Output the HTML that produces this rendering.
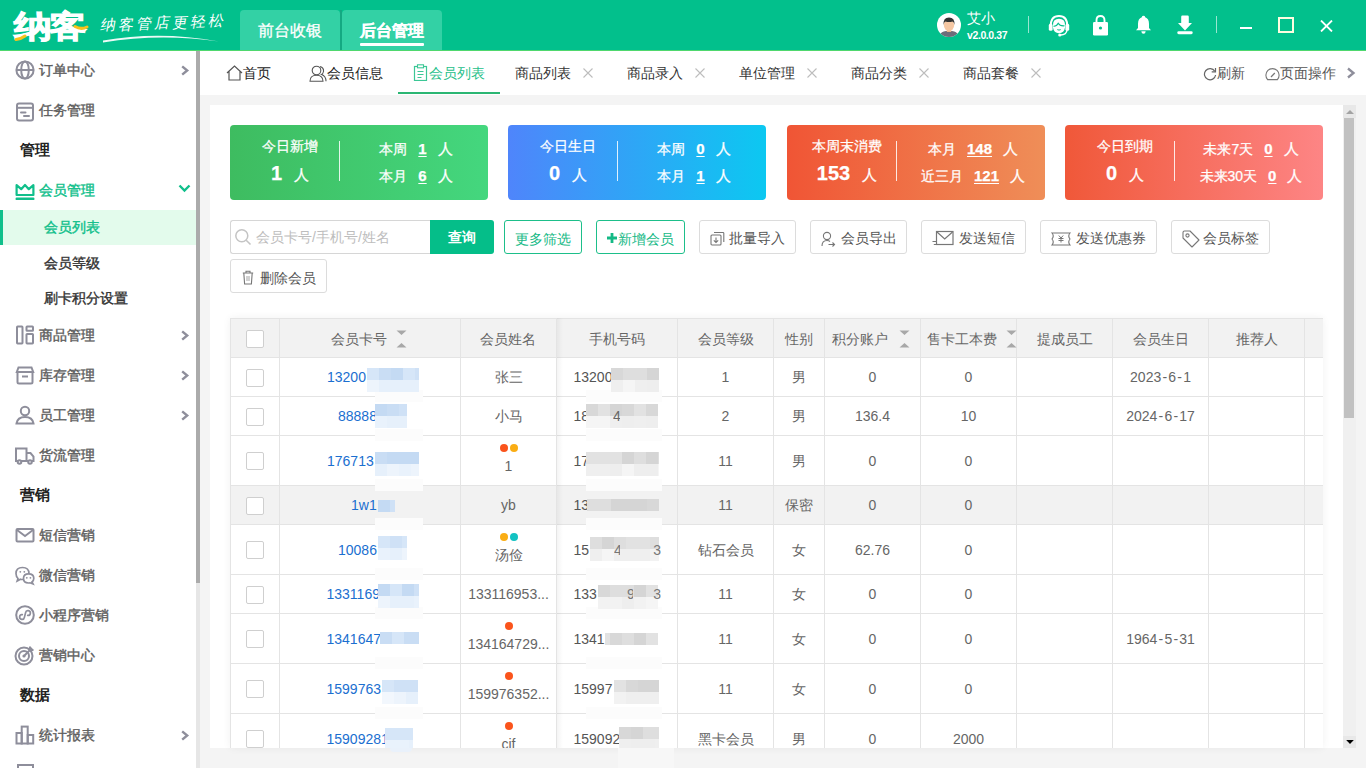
<!DOCTYPE html>
<html><head><meta charset="utf-8">
<style>
*{margin:0;padding:0;box-sizing:border-box}
html,body{width:1366px;height:768px;overflow:hidden;background:#fff;font-family:"Liberation Sans",sans-serif;}
.abs{position:absolute}
#hdr{position:absolute;left:0;top:0;width:1366px;height:50px;background:#02c08c}
#hdrline{position:absolute;left:0;top:50px;width:1366px;height:1px;background:#4fd86e}
.htab{position:absolute;top:10px;height:40px;width:100px;background:#33d1a5;border-radius:4px 4px 0 0;color:#fff;font-size:16px;line-height:20px;padding-top:11px;text-align:center;-webkit-text-stroke:0.3px #fff}
#side{position:absolute;left:0;top:51px;width:196px;height:717px;background:#fff;overflow:hidden}
.si{position:absolute;left:0;width:196px;height:40px;font-size:14px;color:#555;font-weight:500}
.si .tx{position:absolute;left:39px;top:0;line-height:40px}
.si svg.ic{position:absolute;left:15px;top:10px}
.si .chev{position:absolute;left:180px;top:15px}
.sec{position:absolute;left:20px;font-size:15px;font-weight:700;color:#222;line-height:40px}
.sub{position:absolute;left:0;width:196px;height:35px;font-size:14px;color:#333;font-weight:500;line-height:35px}
.sub .tx{position:absolute;left:44px;top:0}
.ttx{position:absolute;top:63px;font-size:14px;line-height:20px;white-space:nowrap}
.stx{font-size:14px;line-height:20px;-webkit-text-stroke:0.4px currentColor;white-space:nowrap}
.ssec{font-size:15px;line-height:20px;font-weight:700;color:#222}
#sbtrack{position:absolute;left:196px;top:51px;width:4px;height:717px;background:#e6e6e6}
#sbthumb{position:absolute;left:196px;top:51px;width:4px;height:532px;background:#ababab}
#content{position:absolute;left:200px;top:51px;width:1166px;height:717px;background:#f4f4f4}
#tabbar{position:absolute;left:200px;top:51px;width:1166px;height:44px;background:#fff}
.tt{position:absolute;top:0;height:44px;line-height:44px;font-size:14px;color:#333;white-space:nowrap}
.tt .x{position:absolute;top:0;color:#bbb;font-size:14px}
.scard{top:125px;width:258px;height:75px;border-radius:4px;color:#fff;-webkit-text-stroke:0.25px #fff}
.gbtn{top:220px;height:34px;border:1.5px solid #1dbf8a;border-radius:3px;color:#14b985;font-size:14px;line-height:20px;padding-top:7.5px;text-align:center;white-space:nowrap}
.wbtn{height:34px;border:1px solid #dcdcdc;border-radius:3px;background:#fff}
#card{position:absolute;left:210px;top:105px;width:1146px;height:643px;background:#fff;overflow:hidden}
</style></head><body>
<div id="hdr"></div>
<div id="hdrline"></div>
<div class="abs" style="left:14px;top:7px;font-size:36px;font-weight:700;color:#fff;line-height:40px;letter-spacing:-2px;transform:scaleX(1.04) scaleY(0.85);transform-origin:0 50%;-webkit-text-stroke:1.2px #fff">纳客</div>
<svg class="abs" style="left:12px;top:24px" width="80" height="20"><path d="M4 15.5 Q9 15 13 12" stroke="#f8c21c" stroke-width="3" fill="none" stroke-linecap="round"/><path d="M63 2.5 Q69 6 75 3" stroke="#f8c21c" stroke-width="3" fill="none" stroke-linecap="round"/></svg>
<div class="abs" style="left:101px;top:13px;font-size:15px;color:#fff;line-height:20px;letter-spacing:3px;transform:skewX(-12deg) rotate(-2deg)">纳客管店更轻松</div>
<svg class="abs" style="left:100px;top:32px" width="125" height="12"><path d="M3 8.5 Q60 -1.5 119 9.5 Q60 1 3 10.5Z" fill="#fff" opacity=".92"/></svg>
<div class="htab" style="left:240px">前台收银</div>
<div class="htab" style="left:342px;font-weight:700">后台管理</div><div class="abs" style="left:360px;top:43px;width:64px;height:2.5px;background:#fff;border-radius:1px"></div>
<div class="abs" style="left:340px;top:10px;width:2px;height:40px;background:#14a982"></div>
<!-- user -->
<div class="abs" style="left:937px;top:13px;width:24px;height:24px;border-radius:50%;background:#fff;overflow:hidden">
 <svg width="24" height="24" viewBox="0 0 24 24"><path d="M3 22 Q4 18.5 9 18 H15 Q20 18.5 21 22 V24 H3Z" fill="#6d6d7a"/><rect x="9.8" y="15" width="4.4" height="4" fill="#eab68f"/><ellipse cx="12" cy="12" rx="5.2" ry="6" fill="#f5c7a3"/><path d="M6.6 12 Q6 4.6 12 4.6 Q18 4.6 17.4 12 Q17 8.8 15.5 8.4 Q12 9.6 8.5 8.4 Q7 8.8 6.6 12Z" fill="#333"/></svg>
</div>
<div class="abs" style="left:967px;top:9px;font-size:14px;color:#fff;line-height:18px">艾小</div>
<div class="abs" style="left:967px;top:28px;font-size:10.5px;font-weight:700;color:#fff;line-height:14px;letter-spacing:-0.4px">v2.0.0.37</div>
<div class="abs" style="left:1028px;top:16px;width:1px;height:17px;background:rgba(255,255,255,.6)"></div>
<svg class="abs" style="left:1048px;top:13.5px" width="22" height="23" viewBox="0 0 22 23"><path d="M2.6 12.5 Q2.6 2 11 2 Q19.4 2 19.4 12.5" stroke="#fff" stroke-width="1.9" fill="none"/><rect x="0.8" y="9.8" width="3.8" height="7" rx="1.6" fill="#fff"/><rect x="17.4" y="9.8" width="3.8" height="7" rx="1.6" fill="#fff"/><path d="M5 11 Q5 4.8 11 4.8 Q17 4.8 17 11 V13.5 Q16.2 19.2 11 19.2 Q5.8 19.2 5 13.5Z" fill="#fff"/><path d="M5.5 12.2 Q8.5 12.5 10.2 9.3 Q12 12.3 16.5 11.8" stroke="#02c08c" stroke-width="1.1" fill="none"/><path d="M9.3 15.6 Q11 16.6 12.7 15.6" stroke="#02c08c" stroke-width="1" fill="none"/><path d="M19 16 Q18.5 21 12.5 21" stroke="#fff" stroke-width="1.5" fill="none"/><circle cx="11.8" cy="21" r="1.6" fill="#fff"/></svg>
<svg class="abs" style="left:1092px;top:15px" width="17" height="21" viewBox="0 0 17 21"><path d="M4.5 8 V5.2 Q4.5 1 8.5 1 Q12.5 1 12.5 5.2 V8" stroke="#fff" stroke-width="1.9" fill="none"/><rect x="1" y="7" width="15" height="13.5" rx="1.3" fill="#fff"/><circle cx="8.5" cy="13" r="1.6" fill="#02c08c"/></svg>
<svg class="abs" style="left:1135px;top:15px" width="17" height="20" viewBox="0 0 17 20"><path d="M8.5 0.8 Q10 0.8 10.2 2.2 Q14 3.5 14 9 L14 13 L16 15.2 L1 15.2 L3 13 L3 9 Q3 3.5 6.8 2.2 Q7 0.8 8.5 0.8Z" fill="#fff"/><path d="M6.3 16.2 H10.7 Q10.5 18.8 8.5 18.8 Q6.5 18.8 6.3 16.2Z" fill="#fff"/></svg>
<svg class="abs" style="left:1177px;top:15px" width="16" height="20" viewBox="0 0 16 20"><path d="M4.2 1.8 Q4.2 0.6 5.4 0.6 H10.6 Q11.8 0.6 11.8 1.8 V8 H15 L8 15.5 L1 8 H4.2Z" fill="#fff"/><rect x="0.3" y="16.3" width="15.4" height="2.9" rx="1.4" fill="#fff"/></svg>
<div class="abs" style="left:1216px;top:16px;width:1px;height:17px;background:rgba(255,255,255,.6)"></div>
<div class="abs" style="left:1240px;top:26.5px;width:12px;height:2.5px;background:#fff"></div>
<div class="abs" style="left:1278px;top:17px;width:16px;height:16px;border:2px solid #fdfde0"></div>
<svg class="abs" style="left:1320px;top:20px" width="13" height="12" viewBox="0 0 13 12"><path d="M1 0.5 L12 11.5 M12 0.5 L1 11.5" stroke="#fff" stroke-width="1.8"/></svg>

<div id="side"></div>
<div class="abs stx" style="left:39px;top:60px;color:#5e5e5e">订单中心</div><svg class="abs" style="left:14px;top:59px" width="22" height="22" viewBox="0 0 22 22"><circle cx="11" cy="11" r="8.6" stroke="#8e8e9b" stroke-width="2" fill="none"/><ellipse cx="11" cy="11" rx="3.8" ry="8.6" stroke="#8e8e9b" stroke-width="2" fill="none"/><path d="M2.6 11 H19.4" stroke="#8e8e9b" stroke-width="2" fill="none"/></svg><svg class="abs" style="left:180px;top:65px" width="10" height="11" viewBox="0 0 10 11"><path d="M2.2 1.3 L7.2 5.5 L2.2 9.7" stroke="#8e8e9b" stroke-width="2.4" fill="none"/></svg><div class="abs stx" style="left:39px;top:100px;color:#5e5e5e">任务管理</div><svg class="abs" style="left:14px;top:100.5px" width="22" height="22" viewBox="0 0 22 22"><rect x="3" y="2.5" width="16" height="17" rx="2" stroke="#8e8e9b" stroke-width="2" fill="none"/><path d="M3 6.8 H19" stroke="#8e8e9b" stroke-width="2" fill="none"/><path d="M7 11.5 H11.5 M10 15 H15" stroke="#8e8e9b" stroke-width="2" stroke-linecap="round"/></svg><div class="abs ssec" style="left:20px;top:140px">管理</div><div class="abs stx" style="left:39px;top:180px;color:#10bf8b">会员管理</div><svg class="abs" style="left:14px;top:179px" width="22" height="22" viewBox="0 0 22 22"><path d="M2.6 16 V6.2 L7.2 10.2 L11 6 L14.8 10.2 L19.4 6.2 V16Z" stroke="#10bf8b" stroke-width="2.2" fill="none" stroke-linejoin="round"/><rect x="1.5" y="18.5" width="19" height="2.6" rx="1.2" fill="#10bf8b"/></svg><svg class="abs" style="left:178px;top:184px" width="13" height="9" viewBox="0 0 13 9"><path d="M1.5 1.5 L6.5 6.5 L11.5 1.5" stroke="#10bf8b" stroke-width="2.4" fill="none"/></svg><div class="abs" style="left:0;top:210px;width:196px;height:35px;background:#e3fbec"></div><div class="abs" style="left:0;top:210px;width:3px;height:35px;background:#10bf8b"></div><div class="abs stx" style="left:44px;top:217px;color:#10bf8b">会员列表</div><div class="abs stx" style="left:44px;top:253px;color:#333">会员等级</div><div class="abs stx" style="left:44px;top:288px;color:#333">刷卡积分设置</div><div class="abs stx" style="left:39px;top:325px;color:#5e5e5e">商品管理</div><svg class="abs" style="left:14px;top:324px" width="22" height="22" viewBox="0 0 22 22"><rect x="3" y="2.6" width="5.5" height="16.8" rx="0.6" stroke="#8e8e9b" stroke-width="2" fill="none"/><rect x="12.5" y="2.6" width="6.5" height="4.2" rx="0.6" stroke="#8e8e9b" stroke-width="2" fill="none"/><rect x="12.5" y="10" width="6.5" height="9.4" rx="0.6" stroke="#8e8e9b" stroke-width="2" fill="none"/></svg><svg class="abs" style="left:180px;top:330px" width="10" height="11" viewBox="0 0 10 11"><path d="M2.2 1.3 L7.2 5.5 L2.2 9.7" stroke="#8e8e9b" stroke-width="2.4" fill="none"/></svg><div class="abs stx" style="left:39px;top:365px;color:#5e5e5e">库存管理</div><svg class="abs" style="left:14px;top:364px" width="22" height="22" viewBox="0 0 22 22"><path d="M3.5 8 V18 Q3.5 19.5 5 19.5 H17 Q18.5 19.5 18.5 18 V8" stroke="#8e8e9b" stroke-width="2" fill="none"/><path d="M2.8 8 L4.5 3.5 H17.5 L19.2 8Z" stroke="#8e8e9b" stroke-width="2" fill="none"/><path d="M8 12.5 H14" stroke="#8e8e9b" stroke-width="2" fill="none"/></svg><svg class="abs" style="left:180px;top:370px" width="10" height="11" viewBox="0 0 10 11"><path d="M2.2 1.3 L7.2 5.5 L2.2 9.7" stroke="#8e8e9b" stroke-width="2.4" fill="none"/></svg><div class="abs stx" style="left:39px;top:405px;color:#5e5e5e">员工管理</div><svg class="abs" style="left:14px;top:404px" width="22" height="22" viewBox="0 0 22 22"><circle cx="11" cy="7" r="4.2" stroke="#8e8e9b" stroke-width="2" fill="none"/><path d="M2.5 19.5 Q3.5 13 11 13 Q18.5 13 19.5 19.5Z" stroke="#8e8e9b" stroke-width="2" fill="none"/></svg><svg class="abs" style="left:180px;top:410px" width="10" height="11" viewBox="0 0 10 11"><path d="M2.2 1.3 L7.2 5.5 L2.2 9.7" stroke="#8e8e9b" stroke-width="2.4" fill="none"/></svg><div class="abs stx" style="left:39px;top:445px;color:#5e5e5e">货流管理</div><svg class="abs" style="left:14px;top:444px" width="22" height="22" viewBox="0 0 22 22"><path d="M2 4.5 H12.5 V17 H2Z" stroke="#8e8e9b" stroke-width="2" fill="none"/><path d="M12.5 9 H16.5 L19.5 12.5 V17 H12.5" stroke="#8e8e9b" stroke-width="2" fill="none"/><circle cx="5.5" cy="18" r="1.8" fill="#fff" stroke="#8e8e9b" stroke-width="2" fill="none"/><circle cx="16" cy="18" r="1.8" fill="#fff" stroke="#8e8e9b" stroke-width="2" fill="none"/></svg><div class="abs ssec" style="left:20px;top:485px">营销</div><div class="abs stx" style="left:39px;top:525px;color:#5e5e5e">短信营销</div><svg class="abs" style="left:14px;top:524px" width="22" height="22" viewBox="0 0 22 22"><rect x="2.5" y="5" width="17" height="12.5" rx="1" stroke="#8e8e9b" stroke-width="2" fill="none"/><path d="M3 6 L11 12 L19 6" stroke="#8e8e9b" stroke-width="1.9" fill="none"/></svg><div class="abs stx" style="left:39px;top:565px;color:#5e5e5e">微信营销</div><svg class="abs" style="left:14px;top:564px" width="22" height="22" viewBox="0 0 22 22"><path d="M4 14.5 L3.2 17 L6.5 15.2 Q7.5 15.5 8.5 15.5 Q15 15.5 15 9.5 Q15 3.5 8.5 3.5 Q2 3.5 2 9.5 Q2 12.5 4 14.5Z" stroke="#8e8e9b" stroke-width="1.7" fill="#fff"/><path d="M18 18 L19 20 L16 18.8 Q15.2 19 14.5 19 Q9.5 19 9.5 14.3 Q9.5 9.8 14.5 9.8 Q19.8 9.8 19.8 14.3 Q19.8 16.5 18 18Z" stroke="#8e8e9b" stroke-width="1.7" fill="#fff"/><circle cx="6.3" cy="7.8" r="0.9" fill="#8e8e9b"/><circle cx="10.3" cy="7.8" r="0.9" fill="#8e8e9b"/><circle cx="12.8" cy="13.8" r="0.9" fill="#8e8e9b"/><circle cx="16.4" cy="13.8" r="0.9" fill="#8e8e9b"/></svg><div class="abs stx" style="left:39px;top:605px;color:#5e5e5e">小程序营销</div><svg class="abs" style="left:14px;top:604px" width="22" height="22" viewBox="0 0 22 22"><circle cx="11" cy="11" r="8.8" stroke="#8e8e9b" stroke-width="2" fill="none"/><path d="M8.3 10.6 A2.4 2.4 0 1 0 10.4 13.4 L11.6 8.6 A2.4 2.4 0 1 1 13.7 11.4" stroke="#8e8e9b" stroke-width="1.7" fill="none" stroke-linecap="round"/></svg><div class="abs stx" style="left:39px;top:645px;color:#5e5e5e">营销中心</div><svg class="abs" style="left:14px;top:644px" width="22" height="22" viewBox="0 0 22 22"><circle cx="10" cy="12" r="8.5" stroke="#8e8e9b" stroke-width="2" fill="none"/><circle cx="10" cy="12" r="5" stroke="#8e8e9b" stroke-width="2" fill="none"/><circle cx="10" cy="12" r="1.6" fill="#8e8e9b"/><path d="M10 12 L18 4 M16 2.5 V6 H19.5" stroke="#8e8e9b" stroke-width="2" fill="none"/></svg><div class="abs ssec" style="left:20px;top:685px">数据</div><div class="abs stx" style="left:39px;top:725px;color:#5e5e5e">统计报表</div><svg class="abs" style="left:14px;top:724px" width="22" height="22" viewBox="0 0 22 22"><rect x="2.5" y="9" width="5.2" height="10.5" stroke="#8e8e9b" stroke-width="2" fill="none"/><rect x="7.7" y="2.6" width="6" height="16.9" stroke="#8e8e9b" stroke-width="2" fill="none"/><rect x="13.7" y="11" width="5.5" height="8.5" stroke="#8e8e9b" stroke-width="2" fill="none"/></svg><svg class="abs" style="left:180px;top:730px" width="10" height="11" viewBox="0 0 10 11"><path d="M2.2 1.3 L7.2 5.5 L2.2 9.7" stroke="#8e8e9b" stroke-width="2.4" fill="none"/></svg><div class="abs" style="left:17px;top:764px;width:17px;height:6px;border:2px solid #8e8e9b;border-bottom:none"></div>
<div id="sbtrack"></div><div id="sbthumb"></div>
<div id="content"></div>
<div id="tabbar"></div>
<svg class="abs" style="left:226px;top:65px" width="17" height="16" viewBox="0 0 17 16"><path d="M1 8 L8.5 1 L16 8 M3 6.5 V15 H14 V6.5" stroke="#555" stroke-width="1.2" fill="none"/></svg>
<div class="abs ttx" style="left:243px;color:#222">首页</div>
<svg class="abs" style="left:309px;top:65px" width="18" height="17" viewBox="0 0 18 17"><circle cx="7.5" cy="5.5" r="4.3" stroke="#555" stroke-width="1.1" fill="none"/><path d="M1 16.3 Q1 10.3 7.5 10.3 Q14 10.3 14 16.3Z" stroke="#555" stroke-width="1.1" fill="none"/><path d="M11 1.6 Q15 2.5 14.5 6.5 Q14 8.8 12.5 9.5 Q17 11 17 16.3" stroke="#555" stroke-width="1.1" fill="none"/></svg>
<div class="abs ttx" style="left:327px;color:#222">会员信息</div>
<svg class="abs" style="left:413px;top:64px" width="16" height="17" viewBox="0 0 16 17"><rect x="1.5" y="2.5" width="12" height="14" stroke="#3cc796" stroke-width="1.2" fill="none"/><rect x="4.5" y="0.8" width="6" height="3" fill="#fff" stroke="#3cc796" stroke-width="1.1"/><path d="M4.5 7.5 H10.5 M4.5 10.5 H10.5 M4.5 13.5 H8.5" stroke="#3cc796" stroke-width="1.1"/></svg>
<div class="abs ttx" style="left:429px;color:#26bf8a">会员列表</div>
<div class="abs" style="left:398px;top:92px;width:102px;height:2px;background:#2bb673"></div>
<div class="abs ttx" style="left:515px;color:#333">商品列表</div><svg class="abs" style="left:583px;top:68px" width="10" height="10" viewBox="0 0 10 10"><path d="M0.5 0.5 L9.5 9.5 M9.5 0.5 L0.5 9.5" stroke="#bdbdbd" stroke-width="1.1"/></svg><div class="abs ttx" style="left:627px;color:#333">商品录入</div><svg class="abs" style="left:695px;top:68px" width="10" height="10" viewBox="0 0 10 10"><path d="M0.5 0.5 L9.5 9.5 M9.5 0.5 L0.5 9.5" stroke="#bdbdbd" stroke-width="1.1"/></svg><div class="abs ttx" style="left:739px;color:#333">单位管理</div><svg class="abs" style="left:807px;top:68px" width="10" height="10" viewBox="0 0 10 10"><path d="M0.5 0.5 L9.5 9.5 M9.5 0.5 L0.5 9.5" stroke="#bdbdbd" stroke-width="1.1"/></svg><div class="abs ttx" style="left:851px;color:#333">商品分类</div><svg class="abs" style="left:919px;top:68px" width="10" height="10" viewBox="0 0 10 10"><path d="M0.5 0.5 L9.5 9.5 M9.5 0.5 L0.5 9.5" stroke="#bdbdbd" stroke-width="1.1"/></svg><div class="abs ttx" style="left:963px;color:#333">商品套餐</div><svg class="abs" style="left:1031px;top:68px" width="10" height="10" viewBox="0 0 10 10"><path d="M0.5 0.5 L9.5 9.5 M9.5 0.5 L0.5 9.5" stroke="#bdbdbd" stroke-width="1.1"/></svg><svg class="abs" style="left:1203px;top:67px" width="14" height="14" viewBox="0 0 14 14"><path d="M11.8 4.2 A5.6 5.6 0 1 0 12.6 8" stroke="#666" stroke-width="1.2" fill="none"/><path d="M12.5 1 V4.8 H8.7" stroke="#666" stroke-width="1.2" fill="none"/></svg>
<div class="abs ttx" style="left:1217px;color:#555">刷新</div>
<svg class="abs" style="left:1265px;top:67px" width="16" height="14" viewBox="0 0 16 14"><path d="M2.6 12.6 A6.6 6.6 0 1 1 12.4 12.6 Z" stroke="#777" stroke-width="1.1" fill="none"/><path d="M6 10 L9.8 6" stroke="#777" stroke-width="1.2"/></svg>
<div class="abs ttx" style="left:1280px;color:#555">页面操作</div>
<svg class="abs" style="left:1346px;top:67px" width="10" height="12" viewBox="0 0 10 12"><path d="M2 1.5 L7.5 6 L2 10.5" stroke="#8e8e9b" stroke-width="2.3" fill="none"/></svg>
<div id="card"></div>

<div class="abs" style="left:230px;top:318px;width:1093px;height:430px;box-shadow:0 0 8px rgba(0,0,0,.06)"></div><div class="abs" id="tbl" style="left:230px;top:318px;width:1093px;height:430px;overflow:hidden;background:#fff"><div class="abs" style="left:0;top:0;width:1093px;height:39px;background:#f2f2f2"></div><div class="abs" style="left:0;top:167px;width:1093px;height:39px;background:#f2f2f2"></div><div class="abs" style="left:0;top:0;width:1093px;height:1px;background:#e4e4e4"></div><div class="abs" style="left:0;top:39px;width:1093px;height:1px;background:#e4e4e4"></div><div class="abs" style="left:0;top:78px;width:1093px;height:1px;background:#e4e4e4"></div><div class="abs" style="left:0;top:117px;width:1093px;height:1px;background:#e4e4e4"></div><div class="abs" style="left:0;top:167px;width:1093px;height:1px;background:#e4e4e4"></div><div class="abs" style="left:0;top:206px;width:1093px;height:1px;background:#e4e4e4"></div><div class="abs" style="left:0;top:256px;width:1093px;height:1px;background:#e4e4e4"></div><div class="abs" style="left:0;top:295px;width:1093px;height:1px;background:#e4e4e4"></div><div class="abs" style="left:0;top:345px;width:1093px;height:1px;background:#e4e4e4"></div><div class="abs" style="left:0;top:395px;width:1093px;height:1px;background:#e4e4e4"></div><div class="abs" style="left:0;top:445px;width:1093px;height:1px;background:#e4e4e4"></div><div class="abs" style="left:0px;top:0;width:1px;height:430px;background:#e4e4e4"></div><div class="abs" style="left:49px;top:0;width:1px;height:430px;background:#e4e4e4"></div><div class="abs" style="left:230px;top:0;width:1px;height:430px;background:#e4e4e4"></div><div class="abs" style="left:326px;top:0;width:1px;height:430px;background:#e4e4e4"></div><div class="abs" style="left:447px;top:0;width:1px;height:430px;background:#e4e4e4"></div><div class="abs" style="left:543px;top:0;width:1px;height:430px;background:#e4e4e4"></div><div class="abs" style="left:594px;top:0;width:1px;height:430px;background:#e4e4e4"></div><div class="abs" style="left:690px;top:0;width:1px;height:430px;background:#e4e4e4"></div><div class="abs" style="left:786px;top:0;width:1px;height:430px;background:#e4e4e4"></div><div class="abs" style="left:882px;top:0;width:1px;height:430px;background:#e4e4e4"></div><div class="abs" style="left:978px;top:0;width:1px;height:430px;background:#e4e4e4"></div><div class="abs" style="left:1074px;top:0;width:1px;height:430px;background:#e4e4e4"></div><div class="abs" style="left:327px;top:0;width:6px;height:430px;background:linear-gradient(90deg,rgba(0,0,0,.045),rgba(0,0,0,0))"></div><div class="abs" style="left:16px;top:12.0px;width:18px;height:18px;border:1px solid #cfcfcf;border-radius:2px;background:#fff"></div><div class="abs" style="left:16px;top:50.5px;width:18px;height:18px;border:1px solid #cfcfcf;border-radius:2px;background:#fff"></div><div class="abs" style="left:16px;top:89.5px;width:18px;height:18px;border:1px solid #cfcfcf;border-radius:2px;background:#fff"></div><div class="abs" style="left:16px;top:134.0px;width:18px;height:18px;border:1px solid #cfcfcf;border-radius:2px;background:#fff"></div><div class="abs" style="left:16px;top:178.5px;width:18px;height:18px;border:1px solid #cfcfcf;border-radius:2px;background:#fff"></div><div class="abs" style="left:16px;top:223.0px;width:18px;height:18px;border:1px solid #cfcfcf;border-radius:2px;background:#fff"></div><div class="abs" style="left:16px;top:267.5px;width:18px;height:18px;border:1px solid #cfcfcf;border-radius:2px;background:#fff"></div><div class="abs" style="left:16px;top:312.0px;width:18px;height:18px;border:1px solid #cfcfcf;border-radius:2px;background:#fff"></div><div class="abs" style="left:16px;top:362.0px;width:18px;height:18px;border:1px solid #cfcfcf;border-radius:2px;background:#fff"></div><div class="abs" style="left:16px;top:412.0px;width:18px;height:18px;border:1px solid #cfcfcf;border-radius:2px;background:#fff"></div><div class="abs" style="left:100.5px;top:10.5px;font-size:14px;line-height:20px;color:#666;white-space:nowrap;">会员卡号</div><svg class="abs" style="left:166px;top:12px" width="11" height="18" viewBox="0 0 11 18"><path d="M0.5 0.5 H10.5 L5.5 5Z M0.5 17.5 H10.5 L5.5 13Z" fill="#a8a8a8"/></svg><div class="abs" style="left:178px;top:10.5px;width:200px;text-align:center;font-size:14px;line-height:20px;color:#666;white-space:nowrap;">会员姓名</div><div class="abs" style="left:287px;top:10.5px;width:200px;text-align:center;font-size:14px;line-height:20px;color:#666;white-space:nowrap;">手机号码</div><div class="abs" style="left:395.5px;top:10.5px;width:200px;text-align:center;font-size:14px;line-height:20px;color:#666;white-space:nowrap;">会员等级</div><div class="abs" style="left:469px;top:10.5px;width:200px;text-align:center;font-size:14px;line-height:20px;color:#666;white-space:nowrap;">性别</div><div class="abs" style="left:602px;top:10.5px;font-size:14px;line-height:20px;color:#666;white-space:nowrap;">积分账户</div><svg class="abs" style="left:668.5px;top:12px" width="11" height="18" viewBox="0 0 11 18"><path d="M0.5 0.5 H10.5 L5.5 5Z M0.5 17.5 H10.5 L5.5 13Z" fill="#a8a8a8"/></svg><div class="abs" style="left:696.5px;top:10.5px;font-size:14px;line-height:20px;color:#666;white-space:nowrap;">售卡工本费</div><svg class="abs" style="left:775.5px;top:12px" width="11" height="18" viewBox="0 0 11 18"><path d="M0.5 0.5 H10.5 L5.5 5Z M0.5 17.5 H10.5 L5.5 13Z" fill="#a8a8a8"/></svg><div class="abs" style="left:734.5px;top:10.5px;width:200px;text-align:center;font-size:14px;line-height:20px;color:#666;white-space:nowrap;">提成员工</div><div class="abs" style="left:830.5px;top:10.5px;width:200px;text-align:center;font-size:14px;line-height:20px;color:#666;white-space:nowrap;">会员生日</div><div class="abs" style="left:926.5px;top:10.5px;width:200px;text-align:center;font-size:14px;line-height:20px;color:#666;white-space:nowrap;">推荐人</div><div class="abs" style="left:97px;top:49.0px;font-size:14px;line-height:20px;color:#1b6fd0;white-space:nowrap;">13200</div><div class="abs" style="left:178.5px;top:49.0px;width:200px;text-align:center;font-size:14px;line-height:20px;color:#666;white-space:nowrap;">张三</div><div class="abs" style="left:343.5px;top:49.0px;font-size:14px;line-height:20px;color:#555;white-space:nowrap;">13200</div><div class="abs" style="left:395.5px;top:49.0px;width:200px;text-align:center;font-size:14px;line-height:20px;color:#666;white-space:nowrap;">1</div><div class="abs" style="left:469px;top:49.0px;width:200px;text-align:center;font-size:14px;line-height:20px;color:#666;white-space:nowrap;">男</div><div class="abs" style="left:542.5px;top:49.0px;width:200px;text-align:center;font-size:14px;line-height:20px;color:#666;white-space:nowrap;">0</div><div class="abs" style="left:638.5px;top:49.0px;width:200px;text-align:center;font-size:14px;line-height:20px;color:#666;white-space:nowrap;">0</div><div class="abs" style="left:830.5px;top:49.0px;width:200px;text-align:center;font-size:14px;line-height:20px;color:#666;white-space:nowrap;">2023<span style="margin:0 1.2px">-</span>6<span style="margin:0 1.2px">-</span>1</div><div class="abs" style="left:108px;top:88.0px;font-size:14px;line-height:20px;color:#1b6fd0;white-space:nowrap;">88888</div><div class="abs" style="left:178.5px;top:88.0px;width:200px;text-align:center;font-size:14px;line-height:20px;color:#666;white-space:nowrap;">小马</div><div class="abs" style="left:343.5px;top:88.0px;font-size:14px;line-height:20px;color:#555;white-space:nowrap;">18</div><div class="abs" style="left:395.5px;top:88.0px;width:200px;text-align:center;font-size:14px;line-height:20px;color:#666;white-space:nowrap;">2</div><div class="abs" style="left:469px;top:88.0px;width:200px;text-align:center;font-size:14px;line-height:20px;color:#666;white-space:nowrap;">男</div><div class="abs" style="left:542.5px;top:88.0px;width:200px;text-align:center;font-size:14px;line-height:20px;color:#666;white-space:nowrap;">136.4</div><div class="abs" style="left:638.5px;top:88.0px;width:200px;text-align:center;font-size:14px;line-height:20px;color:#666;white-space:nowrap;">10</div><div class="abs" style="left:830.5px;top:88.0px;width:200px;text-align:center;font-size:14px;line-height:20px;color:#666;white-space:nowrap;">2024<span style="margin:0 1.2px">-</span>6<span style="margin:0 1.2px">-</span>17</div><div class="abs" style="left:97px;top:132.5px;font-size:14px;line-height:20px;color:#1b6fd0;white-space:nowrap;">176713</div><div class="abs" style="left:269.5px;top:126px;width:8px;height:8px;border-radius:50%;background:#fa541c"></div><div class="abs" style="left:279.5px;top:126px;width:8px;height:8px;border-radius:50%;background:#faad14"></div><div class="abs" style="left:178.5px;top:138px;width:200px;text-align:center;font-size:14px;line-height:20px;color:#666;white-space:nowrap;">1</div><div class="abs" style="left:343.5px;top:132.5px;font-size:14px;line-height:20px;color:#555;white-space:nowrap;">17</div><div class="abs" style="left:395.5px;top:132.5px;width:200px;text-align:center;font-size:14px;line-height:20px;color:#666;white-space:nowrap;">11</div><div class="abs" style="left:469px;top:132.5px;width:200px;text-align:center;font-size:14px;line-height:20px;color:#666;white-space:nowrap;">男</div><div class="abs" style="left:542.5px;top:132.5px;width:200px;text-align:center;font-size:14px;line-height:20px;color:#666;white-space:nowrap;">0</div><div class="abs" style="left:638.5px;top:132.5px;width:200px;text-align:center;font-size:14px;line-height:20px;color:#666;white-space:nowrap;">0</div><div class="abs" style="left:121px;top:177.0px;font-size:14px;line-height:20px;color:#1b6fd0;white-space:nowrap;">1w1</div><div class="abs" style="left:178.5px;top:177.0px;width:200px;text-align:center;font-size:14px;line-height:20px;color:#666;white-space:nowrap;">yb</div><div class="abs" style="left:343.5px;top:177.0px;font-size:14px;line-height:20px;color:#555;white-space:nowrap;">13</div><div class="abs" style="left:395.5px;top:177.0px;width:200px;text-align:center;font-size:14px;line-height:20px;color:#666;white-space:nowrap;">11</div><div class="abs" style="left:469px;top:177.0px;width:200px;text-align:center;font-size:14px;line-height:20px;color:#666;white-space:nowrap;">保密</div><div class="abs" style="left:542.5px;top:177.0px;width:200px;text-align:center;font-size:14px;line-height:20px;color:#666;white-space:nowrap;">0</div><div class="abs" style="left:638.5px;top:177.0px;width:200px;text-align:center;font-size:14px;line-height:20px;color:#666;white-space:nowrap;">0</div><div class="abs" style="left:108px;top:221.5px;font-size:14px;line-height:20px;color:#1b6fd0;white-space:nowrap;">10086</div><div class="abs" style="left:269.5px;top:215px;width:8px;height:8px;border-radius:50%;background:#faad14"></div><div class="abs" style="left:279.5px;top:215px;width:8px;height:8px;border-radius:50%;background:#13c2c2"></div><div class="abs" style="left:178.5px;top:227px;width:200px;text-align:center;font-size:14px;line-height:20px;color:#666;white-space:nowrap;">汤俭</div><div class="abs" style="left:343.5px;top:221.5px;font-size:14px;line-height:20px;color:#555;white-space:nowrap;">15</div><div class="abs" style="left:395.5px;top:221.5px;width:200px;text-align:center;font-size:14px;line-height:20px;color:#666;white-space:nowrap;">钻石会员</div><div class="abs" style="left:469px;top:221.5px;width:200px;text-align:center;font-size:14px;line-height:20px;color:#666;white-space:nowrap;">女</div><div class="abs" style="left:542.5px;top:221.5px;width:200px;text-align:center;font-size:14px;line-height:20px;color:#666;white-space:nowrap;">62.76</div><div class="abs" style="left:638.5px;top:221.5px;width:200px;text-align:center;font-size:14px;line-height:20px;color:#666;white-space:nowrap;">0</div><div class="abs" style="left:96.5px;top:266.0px;font-size:14px;line-height:20px;color:#1b6fd0;white-space:nowrap;">1331169</div><div class="abs" style="left:178.5px;top:266.0px;width:200px;text-align:center;font-size:14px;line-height:20px;color:#666;white-space:nowrap;">133116953...</div><div class="abs" style="left:343.5px;top:266.0px;font-size:14px;line-height:20px;color:#555;white-space:nowrap;">133</div><div class="abs" style="left:395.5px;top:266.0px;width:200px;text-align:center;font-size:14px;line-height:20px;color:#666;white-space:nowrap;">11</div><div class="abs" style="left:469px;top:266.0px;width:200px;text-align:center;font-size:14px;line-height:20px;color:#666;white-space:nowrap;">女</div><div class="abs" style="left:542.5px;top:266.0px;width:200px;text-align:center;font-size:14px;line-height:20px;color:#666;white-space:nowrap;">0</div><div class="abs" style="left:638.5px;top:266.0px;width:200px;text-align:center;font-size:14px;line-height:20px;color:#666;white-space:nowrap;">0</div><div class="abs" style="left:96.5px;top:310.5px;font-size:14px;line-height:20px;color:#1b6fd0;white-space:nowrap;">1341647</div><div class="abs" style="left:274.5px;top:304px;width:8px;height:8px;border-radius:50%;background:#fa541c"></div><div class="abs" style="left:178.5px;top:316px;width:200px;text-align:center;font-size:14px;line-height:20px;color:#666;white-space:nowrap;">134164729...</div><div class="abs" style="left:343.5px;top:310.5px;font-size:14px;line-height:20px;color:#555;white-space:nowrap;">1341</div><div class="abs" style="left:395.5px;top:310.5px;width:200px;text-align:center;font-size:14px;line-height:20px;color:#666;white-space:nowrap;">11</div><div class="abs" style="left:469px;top:310.5px;width:200px;text-align:center;font-size:14px;line-height:20px;color:#666;white-space:nowrap;">女</div><div class="abs" style="left:542.5px;top:310.5px;width:200px;text-align:center;font-size:14px;line-height:20px;color:#666;white-space:nowrap;">0</div><div class="abs" style="left:638.5px;top:310.5px;width:200px;text-align:center;font-size:14px;line-height:20px;color:#666;white-space:nowrap;">0</div><div class="abs" style="left:830.5px;top:310.5px;width:200px;text-align:center;font-size:14px;line-height:20px;color:#666;white-space:nowrap;">1964<span style="margin:0 1.2px">-</span>5<span style="margin:0 1.2px">-</span>31</div><div class="abs" style="left:96.5px;top:360.5px;font-size:14px;line-height:20px;color:#1b6fd0;white-space:nowrap;">1599763</div><div class="abs" style="left:274.5px;top:354px;width:8px;height:8px;border-radius:50%;background:#fa541c"></div><div class="abs" style="left:178.5px;top:366px;width:200px;text-align:center;font-size:14px;line-height:20px;color:#666;white-space:nowrap;">159976352...</div><div class="abs" style="left:343.5px;top:360.5px;font-size:14px;line-height:20px;color:#555;white-space:nowrap;">15997</div><div class="abs" style="left:395.5px;top:360.5px;width:200px;text-align:center;font-size:14px;line-height:20px;color:#666;white-space:nowrap;">11</div><div class="abs" style="left:469px;top:360.5px;width:200px;text-align:center;font-size:14px;line-height:20px;color:#666;white-space:nowrap;">女</div><div class="abs" style="left:542.5px;top:360.5px;width:200px;text-align:center;font-size:14px;line-height:20px;color:#666;white-space:nowrap;">0</div><div class="abs" style="left:638.5px;top:360.5px;width:200px;text-align:center;font-size:14px;line-height:20px;color:#666;white-space:nowrap;">0</div><div class="abs" style="left:96.5px;top:410.5px;font-size:14px;line-height:20px;color:#1b6fd0;white-space:nowrap;">15909281</div><div class="abs" style="left:274.5px;top:404px;width:8px;height:8px;border-radius:50%;background:#fa541c"></div><div class="abs" style="left:178.5px;top:416px;width:200px;text-align:center;font-size:14px;line-height:20px;color:#666;white-space:nowrap;">cif</div><div class="abs" style="left:343.5px;top:410.5px;font-size:14px;line-height:20px;color:#555;white-space:nowrap;">159092</div><div class="abs" style="left:395.5px;top:410.5px;width:200px;text-align:center;font-size:14px;line-height:20px;color:#666;white-space:nowrap;">黑卡会员</div><div class="abs" style="left:469px;top:410.5px;width:200px;text-align:center;font-size:14px;line-height:20px;color:#666;white-space:nowrap;">男</div><div class="abs" style="left:542.5px;top:410.5px;width:200px;text-align:center;font-size:14px;line-height:20px;color:#666;white-space:nowrap;">0</div><div class="abs" style="left:638.5px;top:410.5px;width:200px;text-align:center;font-size:14px;line-height:20px;color:#666;white-space:nowrap;">2000</div></div>
<div class="abs" style="left:230px;top:220px;width:201px;height:34px;border:1px solid #d6d6d6;border-right:none;border-radius:3px 0 0 3px;background:#fff"></div>
<svg class="abs" style="left:234px;top:228px" width="18" height="18" viewBox="0 0 18 18"><circle cx="7.8" cy="7.8" r="6" stroke="#c4c4c4" stroke-width="1.5" fill="none"/><path d="M12.2 12.2 L16.5 16.5" stroke="#c4c4c4" stroke-width="1.6"/></svg>
<div class="abs" style="left:256px;top:227px;font-size:14px;line-height:20px;color:#bdbdbd;white-space:nowrap">会员卡号/手机号/姓名</div>
<div class="abs" style="left:430px;top:220px;width:64px;height:34px;background:#05be89;border-radius:0 3px 3px 0;color:#fff;font-size:14px;font-weight:700;line-height:34px;text-align:center">查询</div>
<div class="abs gbtn" style="left:504px;width:78px">更多筛选</div>
<div class="abs gbtn" style="left:596px;width:89px;padding-left:20.5px;text-align:left">新增会员</div><svg class="abs" style="left:607px;top:233px" width="10" height="10" viewBox="0 0 10 10"><path d="M0 5 H10 M5 0 V10" stroke="#14b985" stroke-width="2.8"/></svg>
<div class="abs wbtn" style="left:699px;top:220px;width:96.5px"></div><svg class="abs" style="left:710px;top:230.5px" width="15" height="16" viewBox="0 0 15 16"><rect x="1" y="4" width="10" height="10" rx="1" stroke="#777" stroke-width="1.1" fill="none"/><path d="M4 1.5 H13 Q13.8 1.5 13.8 2.3 V11" stroke="#777" stroke-width="1.1" fill="none"/><path d="M6 6.5 V11.5 M3.8 9.3 L6 11.5 L8.2 9.3" stroke="#777" stroke-width="1.1" fill="none"/></svg><div class="abs" style="left:729px;top:228px;font-size:14px;line-height:20px;color:#555;white-space:nowrap">批量导入</div><div class="abs wbtn" style="left:810px;top:220px;width:96.5px"></div><svg class="abs" style="left:821px;top:230.5px" width="15" height="16" viewBox="0 0 15 16"><circle cx="6" cy="5" r="3.6" stroke="#777" stroke-width="1.1" fill="none"/><path d="M1 15 Q1 9.5 6 9.5 Q8 9.5 9 10.5" stroke="#777" stroke-width="1.1" fill="none"/><path d="M7.5 13.5 H13.5 M11.5 11.5 L13.5 13.5 L11.5 15.5" stroke="#777" stroke-width="1.1" fill="none"/></svg><div class="abs" style="left:840.5px;top:228px;font-size:14px;line-height:20px;color:#555;white-space:nowrap">会员导出</div><div class="abs wbtn" style="left:921px;top:220px;width:104.5px"></div><svg class="abs" style="left:932px;top:229.5px" width="22" height="17" viewBox="0 0 22 17"><rect x="4.5" y="1.5" width="16.5" height="13" stroke="#777" stroke-width="1.2" fill="none"/><path d="M5 2 L12.7 9 L20.5 2" stroke="#777" stroke-width="1.2" fill="none"/><path d="M0.5 11.5 H4 M1.8 14.5 H4" stroke="#777" stroke-width="1.1"/></svg><div class="abs" style="left:959px;top:228px;font-size:14px;line-height:20px;color:#555;white-space:nowrap">发送短信</div><div class="abs wbtn" style="left:1040px;top:220px;width:116.5px"></div><svg class="abs" style="left:1051px;top:231.5px" width="20" height="14" viewBox="0 0 20 14"><path d="M1 1 H19 Q16.5 4 19 7 Q16.5 10 19 13 H1 Q3.5 10 1 7 Q3.5 4 1 1Z" stroke="#777" stroke-width="1.1" fill="none"/><path d="M7.8 3.5 L10 6 L12.2 3.5 M10 6 V10.5 M7.5 6.5 H12.5 M7.5 8.5 H12.5" stroke="#777" stroke-width="1" fill="none"/></svg><div class="abs" style="left:1076px;top:228px;font-size:14px;line-height:20px;color:#555;white-space:nowrap">发送优惠券</div><div class="abs wbtn" style="left:1171px;top:220px;width:98.5px"></div><svg class="abs" style="left:1182px;top:229.5px" width="18" height="18" viewBox="0 0 18 18"><path d="M1 2.5 Q1 1 2.5 1 H8 L17 10 L10 17 L1 8Z" stroke="#777" stroke-width="1.1" fill="none" stroke-linejoin="round"/><circle cx="5.5" cy="5.5" r="1.6" stroke="#777" stroke-width="1.1" fill="none"/></svg><div class="abs" style="left:1203px;top:228px;font-size:14px;line-height:20px;color:#555;white-space:nowrap">会员标签</div><div class="abs wbtn" style="left:230px;top:259px;width:97px"></div>
<svg class="abs" style="left:242px;top:270px" width="12" height="15" viewBox="0 0 12 15"><path d="M0.8 3 H11.2 M4 3 V1.3 H8 V3 M1.8 3 L2.6 14 H9.4 L10.2 3" stroke="#777" stroke-width="1.1" fill="none"/><path d="M5 6 V11 M7 6 V11" stroke="#999" stroke-width="0.9"/></svg>
<div class="abs" style="left:260px;top:267.5px;font-size:14px;line-height:20px;color:#555;white-space:nowrap">删除会员</div>
<div class="abs scard" style="left:230px;background:linear-gradient(90deg,#3ebc60,#44d77e)"><div class="abs" style="left:0;top:12px;width:120px;text-align:center;font-size:14px;line-height:18px">今日新增</div><div class="abs" style="left:0;top:35.5px;width:120px;text-align:center;line-height:24px;white-space:nowrap"><b style="font-size:20px">1</b><span style="font-size:15px;margin-left:12px">人</span></div><div class="abs" style="left:109px;top:16px;width:1px;height:40px;background:rgba(255,255,255,.85)"></div><div class="abs" style="left:110px;top:14px;width:152px;text-align:center;line-height:20px;white-space:nowrap;font-size:14px">本周<b style="font-size:15px;text-decoration:underline;text-underline-offset:2px;margin:0 11px">1</b><span style="font-size:15px">人</span></div><div class="abs" style="left:110px;top:41px;width:152px;text-align:center;line-height:20px;white-space:nowrap;font-size:14px">本月<b style="font-size:15px;text-decoration:underline;text-underline-offset:2px;margin:0 11px">6</b><span style="font-size:15px">人</span></div></div><div class="abs scard" style="left:508px;background:linear-gradient(90deg,#4f85fb,#0cc8f1)"><div class="abs" style="left:0;top:12px;width:120px;text-align:center;font-size:14px;line-height:18px">今日生日</div><div class="abs" style="left:0;top:35.5px;width:120px;text-align:center;line-height:24px;white-space:nowrap"><b style="font-size:20px">0</b><span style="font-size:15px;margin-left:12px">人</span></div><div class="abs" style="left:109px;top:16px;width:1px;height:40px;background:rgba(255,255,255,.85)"></div><div class="abs" style="left:110px;top:14px;width:152px;text-align:center;line-height:20px;white-space:nowrap;font-size:14px">本周<b style="font-size:15px;text-decoration:underline;text-underline-offset:2px;margin:0 11px">0</b><span style="font-size:15px">人</span></div><div class="abs" style="left:110px;top:41px;width:152px;text-align:center;line-height:20px;white-space:nowrap;font-size:14px">本月<b style="font-size:15px;text-decoration:underline;text-underline-offset:2px;margin:0 11px">1</b><span style="font-size:15px">人</span></div></div><div class="abs scard" style="left:787px;background:linear-gradient(90deg,#f05535,#ef8e58)"><div class="abs" style="left:0;top:12px;width:120px;text-align:center;font-size:14px;line-height:18px">本周末消费</div><div class="abs" style="left:0;top:35.5px;width:120px;text-align:center;line-height:24px;white-space:nowrap"><b style="font-size:20px">153</b><span style="font-size:15px;margin-left:12px">人</span></div><div class="abs" style="left:109px;top:16px;width:1px;height:40px;background:rgba(255,255,255,.85)"></div><div class="abs" style="left:110px;top:14px;width:152px;text-align:center;line-height:20px;white-space:nowrap;font-size:14px">本月<b style="font-size:15px;text-decoration:underline;text-underline-offset:2px;margin:0 11px">148</b><span style="font-size:15px">人</span></div><div class="abs" style="left:110px;top:41px;width:152px;text-align:center;line-height:20px;white-space:nowrap;font-size:14px">近三月<b style="font-size:15px;text-decoration:underline;text-underline-offset:2px;margin:0 11px">121</b><span style="font-size:15px">人</span></div></div><div class="abs scard" style="left:1065px;background:linear-gradient(90deg,#f05839,#fd8585)"><div class="abs" style="left:0;top:12px;width:120px;text-align:center;font-size:14px;line-height:18px">今日到期</div><div class="abs" style="left:0;top:35.5px;width:120px;text-align:center;line-height:24px;white-space:nowrap"><b style="font-size:20px">0</b><span style="font-size:15px;margin-left:12px">人</span></div><div class="abs" style="left:109px;top:16px;width:1px;height:40px;background:rgba(255,255,255,.85)"></div><div class="abs" style="left:110px;top:14px;width:152px;text-align:center;line-height:20px;white-space:nowrap;font-size:14px">未来7天<b style="font-size:15px;text-decoration:underline;text-underline-offset:2px;margin:0 11px">0</b><span style="font-size:15px">人</span></div><div class="abs" style="left:110px;top:41px;width:152px;text-align:center;line-height:20px;white-space:nowrap;font-size:14px">未来30天<b style="font-size:15px;text-decoration:underline;text-underline-offset:2px;margin:0 11px">0</b><span style="font-size:15px">人</span></div></div>
<div class="abs" style="left:230px;top:318px;width:1093px;height:430px;overflow:hidden"><div class="abs" style="left:145px;top:72px;width:48px;height:12px;background:#fcfcfc"></div><div class="abs" style="left:145px;top:111px;width:48px;height:12px;background:#fcfcfc"></div><div class="abs" style="left:145px;top:161px;width:48px;height:12px;background:#fcfcfc"></div><div class="abs" style="left:145px;top:200px;width:48px;height:12px;background:#fcfcfc"></div><div class="abs" style="left:145px;top:250px;width:48px;height:12px;background:#fcfcfc"></div><div class="abs" style="left:145px;top:289px;width:48px;height:12px;background:#fcfcfc"></div><div class="abs" style="left:145px;top:339px;width:48px;height:12px;background:#fcfcfc"></div><div class="abs" style="left:145px;top:389px;width:48px;height:12px;background:#fcfcfc"></div><div class="abs" style="left:356px;top:72px;width:76px;height:12px;background:#fcfcfc"></div><div class="abs" style="left:356px;top:111px;width:76px;height:12px;background:#fcfcfc"></div><div class="abs" style="left:356px;top:161px;width:76px;height:12px;background:#fcfcfc"></div><div class="abs" style="left:356px;top:200px;width:76px;height:12px;background:#fcfcfc"></div><div class="abs" style="left:356px;top:250px;width:76px;height:12px;background:#fcfcfc"></div><div class="abs" style="left:356px;top:289px;width:76px;height:12px;background:#fcfcfc"></div><div class="abs" style="left:356px;top:339px;width:76px;height:12px;background:#fcfcfc"></div><div class="abs" style="left:356px;top:389px;width:76px;height:12px;background:#fcfcfc"></div><div class="abs" style="left:137.0px;top:50.0px;width:12.0px;height:12.0px;background:#d6e6f8"></div><div class="abs" style="left:137.0px;top:62.0px;width:12.0px;height:12.0px;background:#edf4fc"></div><div class="abs" style="left:149.0px;top:50.0px;width:12.0px;height:12.0px;background:#c9ddf4"></div><div class="abs" style="left:149.0px;top:62.0px;width:12.0px;height:12.0px;background:#e6f0fb"></div><div class="abs" style="left:161.0px;top:50.0px;width:12.0px;height:12.0px;background:#c4daf3"></div><div class="abs" style="left:161.0px;top:62.0px;width:12.0px;height:12.0px;background:#e6f0fb"></div><div class="abs" style="left:173.0px;top:50.0px;width:12.0px;height:12.0px;background:#d6e6f8"></div><div class="abs" style="left:173.0px;top:62.0px;width:12.0px;height:12.0px;background:#e6f0fb"></div><div class="abs" style="left:185.0px;top:50.0px;width:4.0px;height:12.0px;background:#cfe1f6"></div><div class="abs" style="left:185.0px;top:62.0px;width:4.0px;height:12.0px;background:#e6f0fb"></div><div class="abs" style="left:145.0px;top:86.0px;width:12.0px;height:12.0px;background:#c4daf3"></div><div class="abs" style="left:145.0px;top:98.0px;width:12.0px;height:12.0px;background:#e9f2fc"></div><div class="abs" style="left:157.0px;top:86.0px;width:12.0px;height:12.0px;background:#c9ddf4"></div><div class="abs" style="left:157.0px;top:98.0px;width:12.0px;height:12.0px;background:#e6f0fb"></div><div class="abs" style="left:169.0px;top:86.0px;width:8.0px;height:12.0px;background:#cfe1f6"></div><div class="abs" style="left:169.0px;top:98.0px;width:8.0px;height:12.0px;background:#e6f0fb"></div><div class="abs" style="left:145.0px;top:134.0px;width:12.0px;height:12.0px;background:#c9ddf4"></div><div class="abs" style="left:145.0px;top:146.0px;width:12.0px;height:12.0px;background:#e6f0fb"></div><div class="abs" style="left:157.0px;top:134.0px;width:12.0px;height:12.0px;background:#c4daf3"></div><div class="abs" style="left:157.0px;top:146.0px;width:12.0px;height:12.0px;background:#edf4fc"></div><div class="abs" style="left:169.0px;top:134.0px;width:12.0px;height:12.0px;background:#c4daf3"></div><div class="abs" style="left:169.0px;top:146.0px;width:12.0px;height:12.0px;background:#e9f2fc"></div><div class="abs" style="left:181.0px;top:134.0px;width:8.0px;height:12.0px;background:#c4daf3"></div><div class="abs" style="left:181.0px;top:146.0px;width:8.0px;height:12.0px;background:#edf4fc"></div><div class="abs" style="left:147.5px;top:182.0px;width:12.0px;height:12.0px;background:#c4daf3"></div><div class="abs" style="left:159.5px;top:182.0px;width:5.5px;height:12.0px;background:#cfe1f6"></div><div class="abs" style="left:148.0px;top:218.0px;width:12.0px;height:12.0px;background:#d6e6f8"></div><div class="abs" style="left:148.0px;top:230.0px;width:12.0px;height:12.0px;background:#e9f2fc"></div><div class="abs" style="left:160.0px;top:218.0px;width:12.0px;height:12.0px;background:#cfe1f6"></div><div class="abs" style="left:160.0px;top:230.0px;width:12.0px;height:12.0px;background:#e6f0fb"></div><div class="abs" style="left:172.0px;top:218.0px;width:5.0px;height:12.0px;background:#d6e6f8"></div><div class="abs" style="left:172.0px;top:230.0px;width:5.0px;height:12.0px;background:#edf4fc"></div><div class="abs" style="left:148.0px;top:266.0px;width:12.0px;height:12.0px;background:#c4daf3"></div><div class="abs" style="left:148.0px;top:278.0px;width:12.0px;height:12.0px;background:#edf4fc"></div><div class="abs" style="left:160.0px;top:266.0px;width:12.0px;height:12.0px;background:#d6e6f8"></div><div class="abs" style="left:160.0px;top:278.0px;width:12.0px;height:12.0px;background:#e6f0fb"></div><div class="abs" style="left:172.0px;top:266.0px;width:12.0px;height:12.0px;background:#c4daf3"></div><div class="abs" style="left:172.0px;top:278.0px;width:12.0px;height:12.0px;background:#e6f0fb"></div><div class="abs" style="left:184.0px;top:266.0px;width:5.0px;height:12.0px;background:#cfe1f6"></div><div class="abs" style="left:184.0px;top:278.0px;width:5.0px;height:12.0px;background:#e9f2fc"></div><div class="abs" style="left:150.0px;top:314.0px;width:12.0px;height:12.0px;background:#c9ddf4"></div><div class="abs" style="left:162.0px;top:314.0px;width:12.0px;height:12.0px;background:#d6e6f8"></div><div class="abs" style="left:174.0px;top:314.0px;width:12.0px;height:12.0px;background:#c9ddf4"></div><div class="abs" style="left:186.0px;top:314.0px;width:3.0px;height:12.0px;background:#c9ddf4"></div><div class="abs" style="left:152.0px;top:362.0px;width:12.0px;height:12.0px;background:#d6e6f8"></div><div class="abs" style="left:152.0px;top:374.0px;width:12.0px;height:12.0px;background:#f2f7fd"></div><div class="abs" style="left:164.0px;top:362.0px;width:12.0px;height:12.0px;background:#cfe1f6"></div><div class="abs" style="left:164.0px;top:374.0px;width:12.0px;height:12.0px;background:#edf4fc"></div><div class="abs" style="left:176.0px;top:362.0px;width:12.0px;height:12.0px;background:#cfe1f6"></div><div class="abs" style="left:176.0px;top:374.0px;width:12.0px;height:12.0px;background:#e6f0fb"></div><div class="abs" style="left:155.0px;top:410.0px;width:12.0px;height:12.0px;background:#d6e6f8"></div><div class="abs" style="left:155.0px;top:422.0px;width:12.0px;height:12.0px;background:#e9f2fc"></div><div class="abs" style="left:167.0px;top:410.0px;width:12.0px;height:12.0px;background:#d6e6f8"></div><div class="abs" style="left:167.0px;top:422.0px;width:12.0px;height:12.0px;background:#e9f2fc"></div><div class="abs" style="left:179.0px;top:410.0px;width:4.0px;height:12.0px;background:#d6e6f8"></div><div class="abs" style="left:179.0px;top:422.0px;width:4.0px;height:12.0px;background:#e6f0fb"></div><div class="abs" style="left:381.0px;top:50.0px;width:12.0px;height:12.0px;background:#d8d8d8"></div><div class="abs" style="left:381.0px;top:62.0px;width:12.0px;height:12.0px;background:#efefef"></div><div class="abs" style="left:393.0px;top:50.0px;width:12.0px;height:12.0px;background:#dedede"></div><div class="abs" style="left:393.0px;top:62.0px;width:12.0px;height:12.0px;background:#f5f5f5"></div><div class="abs" style="left:405.0px;top:50.0px;width:12.0px;height:12.0px;background:#dedede"></div><div class="abs" style="left:405.0px;top:62.0px;width:12.0px;height:12.0px;background:#efefef"></div><div class="abs" style="left:417.0px;top:50.0px;width:12.0px;height:12.0px;background:#d5d5d5"></div><div class="abs" style="left:417.0px;top:62.0px;width:12.0px;height:12.0px;background:#eeeeee"></div><div class="abs" style="left:356.0px;top:86.0px;width:12.0px;height:12.0px;background:#d8d8d8"></div><div class="abs" style="left:356.0px;top:98.0px;width:12.0px;height:12.0px;background:#f5f5f5"></div><div class="abs" style="left:368.0px;top:86.0px;width:12.0px;height:12.0px;background:#e2e2e2"></div><div class="abs" style="left:368.0px;top:98.0px;width:12.0px;height:12.0px;background:#f5f5f5"></div><div class="abs" style="left:380.0px;top:86.0px;width:12.0px;height:12.0px;background:#d5d5d5"></div><div class="abs" style="left:380.0px;top:98.0px;width:12.0px;height:12.0px;background:#efefef"></div><div class="abs" style="left:392.0px;top:86.0px;width:12.0px;height:12.0px;background:#d8d8d8"></div><div class="abs" style="left:392.0px;top:98.0px;width:12.0px;height:12.0px;background:#eeeeee"></div><div class="abs" style="left:404.0px;top:86.0px;width:12.0px;height:12.0px;background:#e2e2e2"></div><div class="abs" style="left:404.0px;top:98.0px;width:12.0px;height:12.0px;background:#efefef"></div><div class="abs" style="left:416.0px;top:86.0px;width:12.0px;height:12.0px;background:#d8d8d8"></div><div class="abs" style="left:416.0px;top:98.0px;width:12.0px;height:12.0px;background:#eeeeee"></div><div class="abs" style="left:355.5px;top:134.0px;width:12.0px;height:12.0px;background:#e2e2e2"></div><div class="abs" style="left:355.5px;top:146.0px;width:12.0px;height:12.0px;background:#efefef"></div><div class="abs" style="left:367.5px;top:134.0px;width:12.0px;height:12.0px;background:#e2e2e2"></div><div class="abs" style="left:367.5px;top:146.0px;width:12.0px;height:12.0px;background:#efefef"></div><div class="abs" style="left:379.5px;top:134.0px;width:12.0px;height:12.0px;background:#e2e2e2"></div><div class="abs" style="left:379.5px;top:146.0px;width:12.0px;height:12.0px;background:#eeeeee"></div><div class="abs" style="left:391.5px;top:134.0px;width:12.0px;height:12.0px;background:#d5d5d5"></div><div class="abs" style="left:391.5px;top:146.0px;width:12.0px;height:12.0px;background:#f5f5f5"></div><div class="abs" style="left:403.5px;top:134.0px;width:12.0px;height:12.0px;background:#dedede"></div><div class="abs" style="left:403.5px;top:146.0px;width:12.0px;height:12.0px;background:#eeeeee"></div><div class="abs" style="left:415.5px;top:134.0px;width:12.0px;height:12.0px;background:#d5d5d5"></div><div class="abs" style="left:415.5px;top:146.0px;width:12.0px;height:12.0px;background:#eeeeee"></div><div class="abs" style="left:427.5px;top:134.0px;width:1.5px;height:12.0px;background:#dedede"></div><div class="abs" style="left:427.5px;top:146.0px;width:1.5px;height:12.0px;background:#f5f5f5"></div><div class="abs" style="left:357.0px;top:181.0px;width:12.0px;height:12.0px;background:#dedede"></div><div class="abs" style="left:369.0px;top:181.0px;width:12.0px;height:12.0px;background:#dedede"></div><div class="abs" style="left:381.0px;top:181.0px;width:12.0px;height:12.0px;background:#d5d5d5"></div><div class="abs" style="left:393.0px;top:181.0px;width:12.0px;height:12.0px;background:#d5d5d5"></div><div class="abs" style="left:405.0px;top:181.0px;width:12.0px;height:12.0px;background:#d5d5d5"></div><div class="abs" style="left:417.0px;top:181.0px;width:12.0px;height:12.0px;background:#d8d8d8"></div><div class="abs" style="left:360.0px;top:219.0px;width:12.0px;height:12.0px;background:#dedede"></div><div class="abs" style="left:360.0px;top:231.0px;width:12.0px;height:12.0px;background:#efefef"></div><div class="abs" style="left:372.0px;top:219.0px;width:12.0px;height:12.0px;background:#d5d5d5"></div><div class="abs" style="left:372.0px;top:231.0px;width:12.0px;height:12.0px;background:#f5f5f5"></div><div class="abs" style="left:384.0px;top:219.0px;width:12.0px;height:12.0px;background:#dedede"></div><div class="abs" style="left:384.0px;top:231.0px;width:12.0px;height:12.0px;background:#efefef"></div><div class="abs" style="left:396.0px;top:219.0px;width:12.0px;height:12.0px;background:#e2e2e2"></div><div class="abs" style="left:396.0px;top:231.0px;width:12.0px;height:12.0px;background:#efefef"></div><div class="abs" style="left:408.0px;top:219.0px;width:12.0px;height:12.0px;background:#e2e2e2"></div><div class="abs" style="left:408.0px;top:231.0px;width:12.0px;height:12.0px;background:#efefef"></div><div class="abs" style="left:420.0px;top:219.0px;width:9.0px;height:12.0px;background:#dedede"></div><div class="abs" style="left:420.0px;top:231.0px;width:9.0px;height:12.0px;background:#f2f2f2"></div><div class="abs" style="left:368.0px;top:267.0px;width:12.0px;height:12.0px;background:#d8d8d8"></div><div class="abs" style="left:368.0px;top:279.0px;width:12.0px;height:12.0px;background:#f2f2f2"></div><div class="abs" style="left:380.0px;top:267.0px;width:12.0px;height:12.0px;background:#dedede"></div><div class="abs" style="left:380.0px;top:279.0px;width:12.0px;height:12.0px;background:#f2f2f2"></div><div class="abs" style="left:392.0px;top:267.0px;width:12.0px;height:12.0px;background:#dedede"></div><div class="abs" style="left:392.0px;top:279.0px;width:12.0px;height:12.0px;background:#eeeeee"></div><div class="abs" style="left:404.0px;top:267.0px;width:12.0px;height:12.0px;background:#d5d5d5"></div><div class="abs" style="left:404.0px;top:279.0px;width:12.0px;height:12.0px;background:#f2f2f2"></div><div class="abs" style="left:416.0px;top:267.0px;width:12.0px;height:12.0px;background:#e2e2e2"></div><div class="abs" style="left:416.0px;top:279.0px;width:12.0px;height:12.0px;background:#f5f5f5"></div><div class="abs" style="left:380.0px;top:315.0px;width:12.0px;height:12.0px;background:#d8d8d8"></div><div class="abs" style="left:392.0px;top:315.0px;width:12.0px;height:12.0px;background:#dedede"></div><div class="abs" style="left:404.0px;top:315.0px;width:12.0px;height:12.0px;background:#d5d5d5"></div><div class="abs" style="left:416.0px;top:315.0px;width:12.0px;height:12.0px;background:#e2e2e2"></div><div class="abs" style="left:384.0px;top:362.0px;width:12.0px;height:12.0px;background:#e2e2e2"></div><div class="abs" style="left:384.0px;top:374.0px;width:12.0px;height:12.0px;background:#f2f2f2"></div><div class="abs" style="left:396.0px;top:362.0px;width:12.0px;height:12.0px;background:#d8d8d8"></div><div class="abs" style="left:396.0px;top:374.0px;width:12.0px;height:12.0px;background:#efefef"></div><div class="abs" style="left:408.0px;top:362.0px;width:12.0px;height:12.0px;background:#d5d5d5"></div><div class="abs" style="left:408.0px;top:374.0px;width:12.0px;height:12.0px;background:#efefef"></div><div class="abs" style="left:420.0px;top:362.0px;width:9.0px;height:12.0px;background:#d5d5d5"></div><div class="abs" style="left:420.0px;top:374.0px;width:9.0px;height:12.0px;background:#efefef"></div><div class="abs" style="left:389.0px;top:409.0px;width:12.0px;height:12.0px;background:#d8d8d8"></div><div class="abs" style="left:389.0px;top:421.0px;width:12.0px;height:12.0px;background:#efefef"></div><div class="abs" style="left:401.0px;top:409.0px;width:12.0px;height:12.0px;background:#d5d5d5"></div><div class="abs" style="left:401.0px;top:421.0px;width:12.0px;height:12.0px;background:#eeeeee"></div><div class="abs" style="left:413.0px;top:409.0px;width:12.0px;height:12.0px;background:#dedede"></div><div class="abs" style="left:413.0px;top:421.0px;width:12.0px;height:12.0px;background:#eeeeee"></div><div class="abs" style="left:425.0px;top:409.0px;width:4.0px;height:12.0px;background:#dedede"></div><div class="abs" style="left:425.0px;top:421.0px;width:4.0px;height:12.0px;background:#efefef"></div></div>
<div class="abs" style="left:1343px;top:105px;width:13px;height:643px;background:#f0f0f0"></div>
<div class="abs" style="left:1343px;top:105px;width:13px;height:13px;background:#e8e8e8"></div>
<svg class="abs" style="left:1345px;top:108px" width="10" height="7" viewBox="0 0 10 7"><path d="M1 6 H9 L5 2Z" fill="#a3a3a3"/></svg>
<div class="abs" style="left:1344px;top:118px;width:10px;height:300px;background:#c1c1c1"></div>
<div class="abs" style="left:1343px;top:736px;width:13px;height:12px;background:#e8e8e8"></div>
<svg class="abs" style="left:1345px;top:739px" width="10" height="7" viewBox="0 0 10 7"><path d="M1.2 1 H8.8 L5 5Z" fill="#000"/></svg>
<div class="abs" style="left:390px;top:748px;width:22px;height:4px;background:#e9f1fb;border-radius:0 0 8px 8px"></div>
<div class="abs" style="left:618px;top:748px;width:56px;height:20px;background:#f7f7f7"></div>
<div class="abs" style="left:605px;top:633px;width:5px;height:12px;background:#e2e2e2"></div>
<div class="abs" style="left:613px;top:406px;width:7px;height:20px;overflow:hidden;font-size:14px;line-height:20px;color:#666">4</div>
<div class="abs" style="left:614px;top:539.5px;width:6px;height:20px;overflow:hidden;font-size:14px;line-height:20px;color:#777">4</div>
<div class="abs" style="left:653px;top:539.5px;width:8px;height:20px;overflow:hidden;font-size:14px;line-height:20px;color:#777;direction:rtl">3</div>
<div class="abs" style="left:627px;top:584px;width:6px;height:20px;overflow:hidden;font-size:14px;line-height:20px;color:#777">9</div>
<div class="abs" style="left:653px;top:584px;width:8px;height:20px;overflow:hidden;font-size:14px;line-height:20px;color:#777;direction:rtl">3</div>
</body></html>
